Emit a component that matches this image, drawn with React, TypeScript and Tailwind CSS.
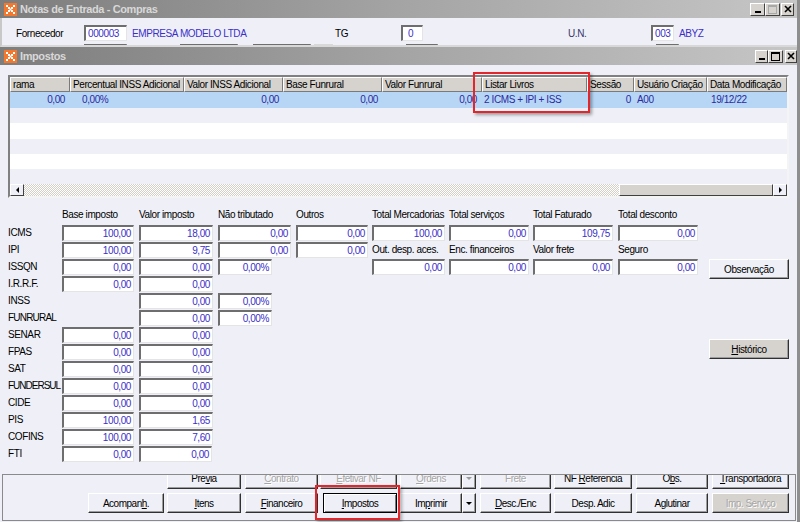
import type { ReactNode } from "react";

const ink = "text-[#3b2fc9]";

function AppIcon() {
  return (
    <svg width="13" height="13" viewBox="0 0 13 13" className="shrink-0">
      <rect width="13" height="13" fill="#f3772c" />
      <path
        d="M2 2h2v2H2zM9 2h2v2H9zM4 4h2v2H4zM7 4h2v2H7zM5.5 5.5h2v2h-2zM4 7h2v2H4zM7 7h2v2H7zM2 9h2v2H2zM9 9h2v2H9z"
        fill="#fff"
      />
    </svg>
  );
}

function CtrlBtn({ kind, dim, cls }: { kind: "min" | "max" | "close"; dim?: boolean; cls: string }) {
  const c = dim ? "#a8a8a8" : "#000";
  return (
    <div
      className={`h-[13px] flex items-center justify-center bg-[#d6d3ce] border border-t-white border-l-white border-b-[#404040] border-r-[#404040] ${cls}`}
    >
      {kind === "min" && (
        <svg width="8" height="8">
          <rect x="1" y="6" width="6" height="2" fill="#000" />
        </svg>
      )}
      {kind === "max" && (
        <svg width="9" height="9">
          <rect x="0.5" y="0.5" width="8" height="8" fill="none" stroke={c} />
          <rect x="0" y="0" width="9" height="2" fill={c} />
        </svg>
      )}
      {kind === "close" && (
        <svg width="8" height="8">
          <path d="M1 1L7 7M7 1L1 7" stroke="#000" strokeWidth="1.6" />
        </svg>
      )}
    </div>
  );
}

function TitleBar({ title, top }: { title: string; top?: boolean }) {
  return (
    <div className="h-[18px] shrink-0 flex items-center bg-linear-to-r from-[#7d7d7d] via-[#a4a4a4] to-[#c6c6c6] pl-[4px]">
      <AppIcon />
      <span className="ml-[3px] text-[11px] font-bold tracking-[-0.4px] text-[#d8d8d8]">{title}</span>
      {top ? (
        <div className="ml-auto flex pr-[3px]">
          <CtrlBtn kind="min" cls="w-[15px]" />
          <CtrlBtn kind="max" dim cls="w-[15px]" />
          <CtrlBtn kind="close" cls="w-[13px] ml-[1px]" />
        </div>
      ) : (
        <div className="ml-auto flex">
          <CtrlBtn kind="min" cls="w-[13px]" />
          <CtrlBtn kind="max" cls="w-[15px]" />
          <CtrlBtn kind="close" cls="w-[12px] ml-[2px]" />
        </div>
      )}
    </div>
  );
}

function Box({ v, cls, left }: { v?: string; cls: string; left?: boolean }) {
  return (
    <div
      className={`h-[16px] shrink-0 bg-white border-t-2 border-l-2 border-t-[#6e6e6e] border-l-[#6e6e6e] border-b border-r border-b-[#e4e4e4] border-r-[#e4e4e4] leading-[13px] whitespace-nowrap overflow-hidden ${ink} ${left ? "pl-[2px]" : "text-right pr-[2px]"} ${cls}`}
    >
      {v}
    </div>
  );
}

const gridCols = [
  { w: "w-[60px]", h: "rama", v: "0,00", c: "text-right pr-[5px]" },
  { w: "w-[114px]", h: "Percentual INSS Adicional", v: "0,00%", c: "pl-[12px]" },
  { w: "w-[99px]", h: "Valor INSS Adicional", v: "0,00", c: "text-right pr-[4px]" },
  { w: "w-[99px]", h: "Base Funrural", v: "0,00", c: "text-right pr-[4px]" },
  { w: "w-[100px]", h: "Valor Funrural", v: "0,00", c: "text-right pr-[5px]" },
  { w: "w-[105px]", h: "Listar Livros", v: "2 ICMS + IPI + ISS", c: "pl-[2px]" },
  { w: "w-[47px]", h: "Sessão", v: "0", c: "text-right pr-[3px]" },
  { w: "w-[73px]", h: "Usuário Criação", v: "A00", c: "pl-[3px]" },
  { w: "w-[80px]", h: "Data Modificação", v: "19/12/22", c: "pl-[4px]" },
];

function Arrow({ dir }: { dir: "l" | "r" }) {
  return (
    <div className="w-[14px] h-[12px] shrink-0 flex items-center justify-center bg-[#eff0f7] border border-t-white border-l-white border-b-[#404040] border-r-[#404040]">
      {dir === "l" ? (
        <span className="border-t-[3px] border-b-[3px] border-r-[3px] border-t-transparent border-b-transparent border-r-black" />
      ) : (
        <span className="border-t-[3px] border-b-[3px] border-l-[3px] border-t-transparent border-b-transparent border-l-black" />
      )}
    </div>
  );
}

function DataGrid() {
  const blanks = [
    { h: "h-[15px]", bg: "bg-[#eff0f7]" },
    { h: "h-[16px]", bg: "bg-white" },
    { h: "h-[15px]", bg: "bg-[#eff0f7]" },
    { h: "h-[15px]", bg: "bg-white" },
    { h: "h-[15px]", bg: "bg-[#eff0f7]" },
  ];
  return (
    <div className="relative ml-[8px] mt-[10px] w-[781px]">
      <div className="border-2 border-t-[#808080] border-l-[#808080] border-b-[#f4f4f4] border-r-[#f4f4f4] bg-white">
        <div className="flex">
          {gridCols.map((c) => (
            <div
              key={c.h}
              className={`${c.w} h-[15px] shrink-0 bg-[#d6d3ce] border-t border-l border-t-white border-l-white border-r border-b border-r-[#7a7a7a] border-b-[#7a7a7a] pl-[2px] leading-[13px] whitespace-nowrap overflow-hidden`}
            >
              {c.h}
            </div>
          ))}
        </div>
        <div className="flex h-[16px] bg-[#b7d6f6] text-[#2a2aa0]">
          {gridCols.map((c) => (
            <div key={c.h} className={`${c.w} shrink-0 leading-[16px] whitespace-nowrap overflow-hidden ${c.c}`}>
              {c.v}
            </div>
          ))}
        </div>
        {blanks.map((b, i) => (
          <div key={i} className={`${b.h} ${b.bg}`} />
        ))}
        <div className="flex h-[12px] bg-[#eff0f7]">
          <Arrow dir="l" />
          <div className="flex-1 bg-[repeating-conic-gradient(#d4d0c8_0_25%,#ffffff_0_50%)] bg-[length:2px_2px]" />
          <div className="w-[154px] h-[12px] shrink-0 bg-[#d6d3ce] border border-t-white border-l-white border-b-[#404040] border-r-[#404040]" />
          <Arrow dir="r" />
        </div>
      </div>
      <div className="absolute left-[465px] top-[-3px] w-[117px] h-[41px] border-2 border-[#e3262b] shadow-[2px_2px_3px_rgba(0,0,0,0.35)]" />
    </div>
  );
}

function L({ t, cls }: { t: string; cls?: string }) {
  return <div className={`leading-[16px] whitespace-nowrap ${cls ?? ""}`}>{t}</div>;
}

function WinBtn({ label, cls, face }: { label: ReactNode; cls: string; face?: string }) {
  return (
    <div
      className={`shrink-0 flex items-center justify-center border border-t-white border-l-white border-b-[#303030] border-r-[#303030] shadow-[inset_-1px_-1px_0_#9c9c9c] whitespace-nowrap ${face ?? "bg-[#eff0f7]"} ${cls}`}
    >
      {label}
    </div>
  );
}

const E = () => <div />;

function TaxForm() {
  const fBase = "w-[72px]";
  const fVal = "w-[74px]";
  const fNt = "w-[73px]";
  const fPct = "w-[54px]";
  const fOut = "w-[72px]";
  const simple: [string, string, string][] = [
    ["SENAR", "0,00", "0,00"],
    ["FPAS", "0,00", "0,00"],
    ["SAT", "0,00", "0,00"],
    ["FUNDERSUL", "0,00", "0,00"],
    ["CIDE", "0,00", "0,00"],
    ["PIS", "100,00", "1,65"],
    ["COFINS", "100,00", "7,60"],
    ["FTI", "0,00", "0,00"],
  ];
  const head = "leading-[13px] whitespace-nowrap";
  return (
    <div className="ml-[8px] mt-[10px] grid grid-cols-[54px_77px_79px_78px_76px_77px_84px_85px_91px_80px] auto-rows-[17px]">
      <E />
      <div className={head}>Base imposto</div>
      <div className={head}>Valor imposto</div>
      <div className={head}>Não tributado</div>
      <div className={head}>Outros</div>
      <div className={head}>Total Mercadorias</div>
      <div className={head}>Total serviços</div>
      <div className={head}>Total Faturado</div>
      <div className={head}>Total desconto</div>
      <E />

      <L t="ICMS" />
      <Box v="100,00" cls={fBase} />
      <Box v="18,00" cls={fVal} />
      <Box v="0,00" cls={fNt} />
      <Box v="0,00" cls={fOut} />
      <Box v="100,00" cls="w-[73px]" />
      <Box v="0,00" cls="w-[80px]" />
      <Box v="109,75" cls="w-[80px]" />
      <Box v="0,00" cls="w-[80px]" />
      <E />

      <L t="IPI" />
      <Box v="100,00" cls={fBase} />
      <Box v="9,75" cls={fVal} />
      <Box v="0,00" cls={fNt} />
      <Box v="0,00" cls={fOut} />
      <L t="Out. desp. aces." />
      <L t="Enc. financeiros" />
      <L t="Valor frete" />
      <L t="Seguro" />
      <E />

      <L t="ISSQN" />
      <Box v="0,00" cls={fBase} />
      <Box v="0,00" cls={fVal} />
      <Box v="0,00%" cls={fPct} />
      <E />
      <Box v="0,00" cls="w-[73px]" />
      <Box v="0,00" cls="w-[80px]" />
      <Box v="0,00" cls="w-[80px]" />
      <Box v="0,00" cls="w-[80px]" />
      <WinBtn label="Observação" cls="w-[80px] h-[20px]" />

      <L t="I.R.R.F." />
      <Box v="0,00" cls={fBase} />
      <Box v="0,00" cls={fVal} />
      <E /><E /><E /><E /><E /><E /><E />

      <L t="INSS" />
      <E />
      <Box v="0,00" cls={fVal} />
      <Box v="0,00%" cls={fPct} />
      <E /><E /><E /><E /><E /><E />

      <L t="FUNRURAL" cls="tracking-[-0.8px]" />
      <E />
      <Box v="0,00" cls={fVal} />
      <Box v="0,00%" cls={fPct} />
      <E /><E /><E /><E /><E /><E />

      {simple.map(([n, b, v], i) => (
        <div key={n} className="contents">
          <L t={n} cls={n === "FUNDERSUL" ? "tracking-[-1px]" : ""} />
          <Box v={b} cls={fBase} />
          <Box v={v} cls={n === "FTI" ? "w-[73px]" : fVal} />
          <E /><E /><E /><E /><E /><E />
          {i === 0 ? (
            <WinBtn
              label={
                <span>
                  <u>H</u>istórico
                </span>
              }
              cls="w-[80px] h-[20px] mt-[12px]"
              face="bg-[#d6d3ce]"
            />
          ) : (
            <E />
          )}
        </div>
      ))}
    </div>
  );
}

function DropArrow({ dim }: { dim?: boolean }) {
  return (
    <WinBtn
      cls="w-[14px] h-full"
      label={
        <span
          className={`border-l-[3px] border-r-[3px] border-t-[3px] border-l-transparent border-r-transparent ${dim ? "border-t-[#9a9a9a]" : "border-t-black"}`}
        />
      }
    />
  );
}

function ButtonPanel() {
  const dis = "text-[#a6a6a6] [text-shadow:1px_1px_0_#ffffff]";
  return (
    <div className="relative ml-[2px] mt-[11px] w-[794px]">
      <div className="h-[47px] border border-[#8a8a8a] overflow-hidden text-[10px] tracking-[-0.5px]">
        <div className="-mt-[7px] flex h-[21px]">
          <WinBtn cls="ml-[164px] w-[74px]" label={<span>Pre<u>v</u>ia</span>} />
          <WinBtn cls={`ml-[4px] w-[73px] ${dis}`} label={<span><u>C</u>ontrato</span>} />
          <WinBtn cls={`ml-[2px] w-[77px] ${dis}`} label={<span><u>E</u>fetivar NF</span>} />
          <WinBtn cls={`ml-[3px] w-[62px] ${dis}`} label={<span><u>O</u>rdens</span>} />
          <DropArrow dim />
          <WinBtn cls={`ml-[4px] w-[71px] ${dis}`} label="Frete" />
          <WinBtn cls="ml-[3px] w-[78px]" label={<span>NF <u>R</u>eferencia</span>} />
          <WinBtn cls="ml-[4px] w-[72px]" label={<span>O<u>b</u>s.</span>} />
          <WinBtn cls="ml-[4px] w-[77px]" label={<span><u>T</u>ransportadora</span>} />
        </div>
        <div className="mt-[4px] flex h-[20px]">
          <WinBtn cls="ml-[85px] w-[76px]" label={<span>Acompan<u>h</u>.</span>} />
          <WinBtn cls="ml-[3px] w-[74px]" label={<span><u>I</u>tens</span>} />
          <WinBtn cls="ml-[4px] w-[73px]" label={<span><u>F</u>inanceiro</span>} />
          <WinBtn
            cls="ml-[5px] w-[74px] !border-black shadow-[inset_1px_1px_0_#ffffff,inset_-1px_-1px_0_#7a7a7a]"
            label={<span><u>I</u>mpostos</span>}
          />
          <WinBtn cls="ml-[3px] w-[62px]" label={<span>Im<u>p</u>rimir</span>} />
          <DropArrow />
          <WinBtn cls="ml-[4px] w-[71px]" label={<span><u>D</u>esc./Enc</span>} />
          <WinBtn cls="ml-[3px] w-[78px]" label="Desp. Adic" />
          <WinBtn cls="ml-[4px] w-[72px]" label={<span>A<u>g</u>lutinar</span>} />
          <WinBtn cls={`ml-[4px] w-[77px] ${dis}`} face="bg-[#d6d3ce]" label="Imp. Serviço" />
        </div>
      </div>
      <div className="absolute left-[313px] top-[11px] w-[85px] h-[35px] border-2 border-[#e3262b] shadow-[2px_2px_3px_rgba(0,0,0,0.3)]" />
    </div>
  );
}

export default function App() {
  const topBox = "h-[16px] shrink-0 bg-white border-t-2 border-l-2 border-t-[#6e6e6e] border-l-[#6e6e6e] border-b border-r border-b-[#e4e4e4] border-r-[#e4e4e4]";
  return (
    <div className="w-[800px] h-[522px] overflow-hidden bg-[#eff0f7] border-r-[3px] border-r-[#8e8e8e] font-['Liberation_Sans',Arial,sans-serif] text-[10px] tracking-[-0.4px] text-black">
      {/* Notas de Entrada - Compras */}
      <TitleBar title="Notas de Entrada - Compras" top />
      <div className="h-[29px] overflow-hidden border-b-2 border-b-[#d8d8d8] border-l-2 border-l-[#c8c8c8]">
        <div className="mt-[7px] flex items-center h-[16px]">
          <span className="ml-[14px] w-[68px] shrink-0">Fornecedor</span>
          <Box v="000003" cls="w-[43px]" left />
          <span className={`ml-[5px] w-[203px] shrink-0 ${ink}`}>EMPRESA MODELO LTDA</span>
          <span className="w-[66px] shrink-0">TG</span>
          <Box v="0" cls="w-[22px] pl-[5px]" left />
          <span className="w-[145px] shrink-0" />
          <span className="w-[83px] shrink-0 text-[#36366a]">U.N.</span>
          <Box v="003" cls="w-[23px]" left />
          <span className={`ml-[5px] ${ink}`}>ABYZ</span>
        </div>
        <div className="mt-[3px] flex h-[16px]">
          <div className={`ml-[82px] w-[43px] ${topBox}`} />
          <div className={`ml-[53px] w-[58px] ${topBox}`} />
          <div className={`ml-[15px] w-[58px] ${topBox}`} />
          <div className="ml-[3px] w-[19px] bg-[#d8d8d8]" />
          <div className={`ml-[73px] w-[32px] ${topBox}`} />
          <div className={`ml-[218px] w-[23px] ${topBox}`} />
        </div>
      </div>

      {/* Impostos */}
      <TitleBar title="Impostos" />
      <DataGrid />
      <TaxForm />
      <ButtonPanel />
    </div>
  );
}
